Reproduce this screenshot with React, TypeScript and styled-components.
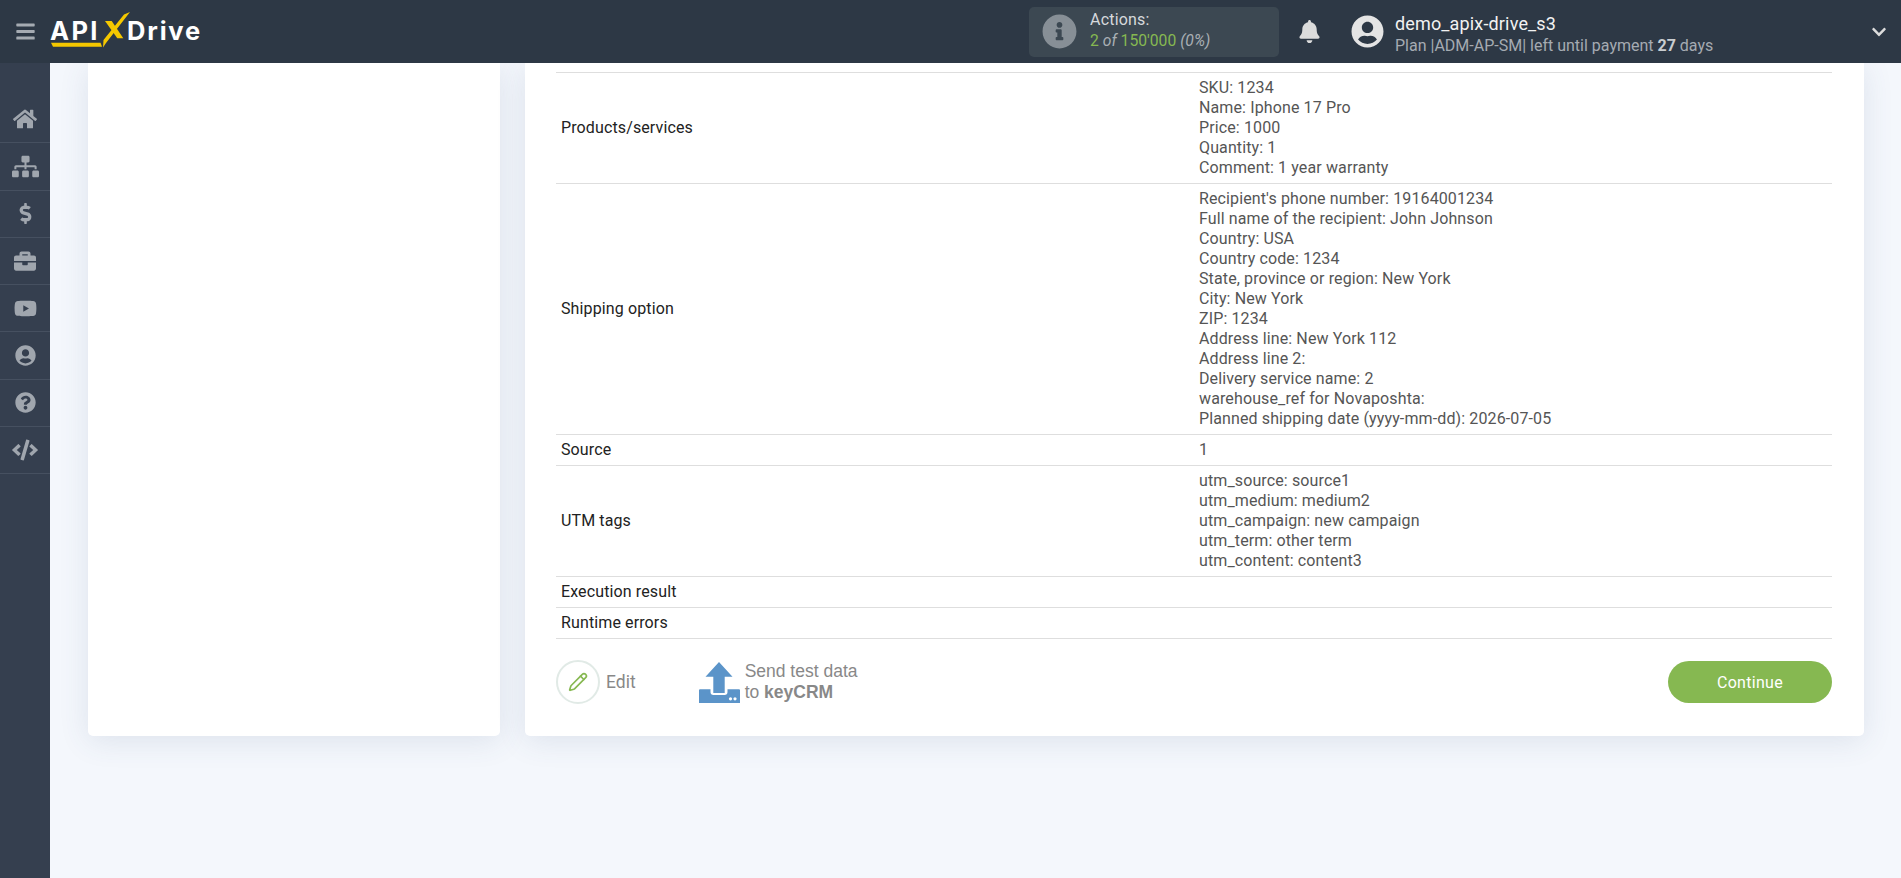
import styled, { createGlobalStyle } from "styled-components";
import {
	FaBars,
	FaBell,
	FaBriefcase,
	FaChevronDown,
	FaCode,
	FaDollarSign,
	FaHome,
	FaInfoCircle,
	FaQuestionCircle,
	FaSitemap,
	FaUserCircle,
	FaYoutube,
} from "react-icons/fa";
import { Pencil } from "lucide-react";

const GlobalStyle = createGlobalStyle`
	* {
		box-sizing: border-box;
	}
	html, body {
		margin: 0;
		height: 100%;
		overflow: hidden;
		background: #f4f7fc;
		font-family: Roboto, "Liberation Sans", sans-serif;
	}
`;

const Page = styled.div`
	display: flex;
	flex-direction: column;
	height: 878px;
`;

const Header = styled.header`
	display: flex;
	align-items: center;
	height: 63px;
	flex-shrink: 0;
	background: #2d3845;
	color: #fff;
	position: relative;
	z-index: 2;
`;

const MenuButton = styled.div`
	display: flex;
	justify-content: center;
	width: 50px;
	font-size: 21px;
	color: #a5abb2;
`;

const Logo = styled.div`
	display: flex;
	align-items: center;
	position: relative;
	width: 152px;
	height: 36px;
	font-family: Inter, sans-serif;
	font-weight: 700;
	font-size: 25.5px;
	color: #fff;
	margin-bottom: 3px;
`;

const LogoApi = styled.span`
	width: 80px;
	letter-spacing: 2.4px;
`;

const LogoDrive = styled.span`
	letter-spacing: 1.8px;
`;

const LogoMark = styled.svg`
	position: absolute;
	left: 0;
	top: 0;
`;

const HeaderRight = styled.div`
	display: flex;
	align-items: center;
	margin-left: 827px;
	flex: 1;
`;

const ActionsBox = styled.div`
	display: flex;
	align-items: center;
	width: 250px;
	height: 50px;
	padding-left: 13px;
	gap: 13px;
	background: #3c4852;
	border-radius: 5px;
`;

const InfoIcon = styled(FaInfoCircle)`
	font-size: 35px;
	color: #878f96;
`;

const ActionsText = styled.div`
	font-size: 16px;
	line-height: 21px;
	letter-spacing: 0.2px;
	color: #d6d9dc;
	margin-top: -3px;
`;

const ActionsCount = styled.div`
	font-size: 15.7px;
	letter-spacing: 0;
	color: #86b851;

	i {
		color: #a9afb4;
	}
`;

const BellIcon = styled(FaBell)`
	font-size: 23px;
	color: #dcdcdc;
	margin-left: 19px;
`;

const Avatar = styled(FaUserCircle)`
	font-size: 33px;
	color: #e4e4e4;
	margin-left: 30px;
`;

const UserBlock = styled.div`
	margin-left: 11px;
	flex: 1;
	padding-top: 5px;
`;

const UserName = styled.div`
	font-size: 18px;
	line-height: 22px;
	letter-spacing: 0.15px;
	color: #f2f2f2;
`;

const UserPlan = styled.div`
	margin-top: 1px;
	font-size: 16px;
	line-height: 20px;
	color: #a5abb2;

	b {
		color: #c9cdd0;
	}
`;

const ChevronIcon = styled(FaChevronDown)`
	font-size: 16px;
	color: #dcdcdc;
	margin-right: 14px;
`;

const Body = styled.div`
	display: flex;
	flex: 1;
	min-height: 0;
`;

const Sidebar = styled.nav`
	width: 50px;
	flex-shrink: 0;
	padding-top: 33px;
	background: #353f4f;
	position: relative;
	z-index: 1;
`;

const NavItem = styled.div<{ $size: number }>`
	display: flex;
	align-items: center;
	justify-content: center;
	height: 47.3px;
	border-bottom: 1px solid #465060;
	font-size: ${(p) => p.$size}px;
	color: #a0a6ae;
`;

const Main = styled.main`
	display: flex;
	align-items: flex-start;
	flex: 1;
	gap: 25px;
	padding: 0 37px 0 38px;
`;

const Card = styled.section`
	background: #fff;
	height: 673px;
	border-radius: 0 0 5px 5px;
	box-shadow: 0 5px 30px rgba(60, 80, 120, 0.12);
`;

const SideCard = styled(Card)`
	width: 412px;
	flex-shrink: 0;
`;

const DetailCard = styled(Card)`
	flex: 1;
	padding: 9px 32px 0 31px;
`;

const Table = styled.div`
	border-top: 1px solid #dedede;
`;

const Row = styled.div`
	display: flex;
	align-items: center;
	padding: 5px 0 5px 5px;
	border-bottom: 1px solid #dedede;
	font-size: 16px;
	line-height: 20px;
	letter-spacing: 0.12px;
`;

const Label = styled.div`
	width: 638px;
	flex-shrink: 0;
	color: #222;
`;

const Value = styled.div`
	color: #555;
`;

const Footer = styled.div`
	display: flex;
	align-items: center;
	margin-top: 21px;
`;

const EditCircle = styled.div`
	display: flex;
	align-items: center;
	justify-content: center;
	width: 44px;
	height: 44px;
	border: 2px solid #e1eae6;
	border-radius: 50%;
	color: #86b851;
`;

const EditLabel = styled.span`
	margin-left: 6px;
	font-size: 17.5px;
	color: #888;
`;

const SendButton = styled.div`
	display: flex;
	align-items: center;
	margin-left: 63px;
	gap: 5px;
`;

const SendText = styled.div`
	font-family: "Liberation Sans", Arial, sans-serif;
	font-size: 17.5px;
	line-height: 21px;
	color: #888;
`;

const ContinueButton = styled.button`
	margin-left: auto;
	width: 164px;
	height: 42px;
	border: 0;
	border-radius: 21px;
	background: #86b851;
	color: #fff;
	font-family: Roboto, sans-serif;
	font-weight: 400;
	font-size: 16px;
	letter-spacing: 0.3px;
`;

const rows: { label: string; lines: string[] }[] = [
	{
		label: "Products/services",
		lines: ["SKU: 1234", "Name: Iphone 17 Pro", "Price: 1000", "Quantity: 1", "Comment: 1 year warranty"],
	},
	{
		label: "Shipping option",
		lines: [
			"Recipient's phone number: 19164001234",
			"Full name of the recipient: John Johnson",
			"Country: USA",
			"Country code: 1234",
			"State, province or region: New York",
			"City: New York",
			"ZIP: 1234",
			"Address line: New York 112",
			"Address line 2:",
			"Delivery service name: 2",
			"warehouse_ref for Novaposhta:",
			"Planned shipping date (yyyy-mm-dd): 2026-07-05",
		],
	},
	{ label: "Source", lines: ["1"] },
	{
		label: "UTM tags",
		lines: [
			"utm_source: source1",
			"utm_medium: medium2",
			"utm_campaign: new campaign",
			"utm_term: other term",
			"utm_content: content3",
		],
	},
	{ label: "Execution result", lines: [""] },
	{ label: "Runtime errors", lines: [""] },
];

export default function App() {
	return (
		<Page>
			<GlobalStyle />
			<Header>
				<MenuButton>
					<FaBars />
				</MenuButton>
				<Logo>
					<LogoMark width="152" height="36" viewBox="0 0 152 36">
						<path d="M1 30.7 H50.5 L52 34.7 H3 Z" fill="#f5c800" />
						<path d="M74 2.5 L80 0 L56 31 L53 35.5 L53.5 28 Z" fill="#f5c800" />
						<path d="M55 9 H61.7 L73.3 26.3 H67.3 Z" fill="#f5c800" />
					</LogoMark>
					<LogoApi>API</LogoApi>
					<LogoDrive>Drive</LogoDrive>
				</Logo>
				<HeaderRight>
					<ActionsBox>
						<InfoIcon />
						<ActionsText>
							Actions:
							<ActionsCount>
								2 <i>of</i> 150'000 <i>(0%)</i>
							</ActionsCount>
						</ActionsText>
					</ActionsBox>
					<BellIcon />
					<Avatar />
					<UserBlock>
						<UserName>demo_apix-drive_s3</UserName>
						<UserPlan>
							Plan |ADM-AP-SM| left until payment <b>27</b> days
						</UserPlan>
					</UserBlock>
					<ChevronIcon />
				</HeaderRight>
			</Header>
			<Body>
				<Sidebar>
					<NavItem $size={24}><FaHome /></NavItem>
					<NavItem $size={27}><FaSitemap /></NavItem>
					<NavItem $size={21}><FaDollarSign /></NavItem>
					<NavItem $size={22}><FaBriefcase /></NavItem>
					<NavItem $size={23}><FaYoutube /></NavItem>
					<NavItem $size={21}><FaUserCircle /></NavItem>
					<NavItem $size={21}><FaQuestionCircle /></NavItem>
					<NavItem $size={26}><FaCode /></NavItem>
				</Sidebar>
				<Main>
					<SideCard />
					<DetailCard>
						<Table>
							{rows.map((row) => (
								<Row key={row.label}>
									<Label>{row.label}</Label>
									<Value>
										{row.lines.map((line, i) => (
											<div key={i}>{line || "\u00a0"}</div>
										))}
									</Value>
								</Row>
							))}
						</Table>
						<Footer>
							<EditCircle>
								<Pencil size={20} strokeWidth={2} />
							</EditCircle>
							<EditLabel>Edit</EditLabel>
							<SendButton>
								<svg width="41" height="41" viewBox="0 0 41 41">
									<path d="M20 0 L33.5 14.7 H25.7 V31 H14.3 V14.7 H6.5 Z" fill="#5b94c9" />
									<path d="M0 28.5 Q0 27.3 1 27.3 H11.5 V30 Q11.5 33 14.5 33 H25.5 Q28.5 33 28.5 30 V27.3 H40 Q41 27.3 41 28.5 V41 H0 Z" fill="#5b94c9" />
									<circle cx="31.5" cy="36.8" r="1.6" fill="#fff" />
									<circle cx="36" cy="36.8" r="1.6" fill="#fff" />
								</svg>
								<SendText>
									Send test data
									<br />
									to <b>keyCRM</b>
								</SendText>
							</SendButton>
							<ContinueButton>Continue</ContinueButton>
						</Footer>
					</DetailCard>
				</Main>
			</Body>
		</Page>
	);
}
